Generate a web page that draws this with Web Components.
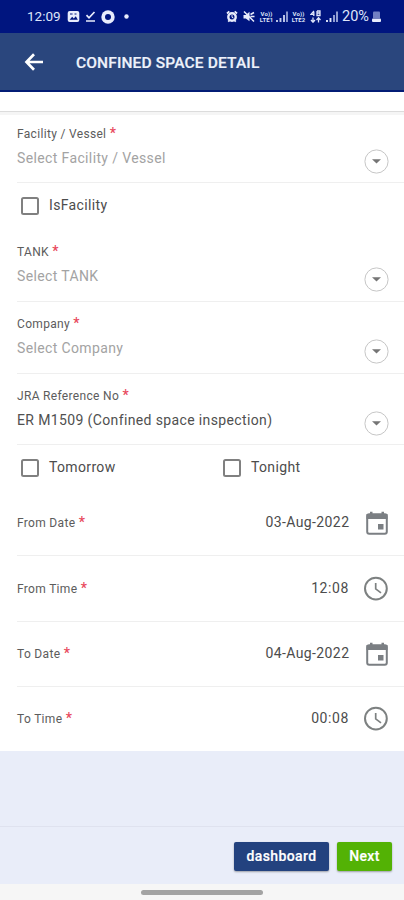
<!DOCTYPE html>
<html lang="en">
<head>
<meta charset="utf-8">
<title>Confined Space Detail</title>
<style>
html, body { margin: 0; height: 100%; background: #e9edf9; }
body { font-family: Roboto, "Liberation Sans", sans-serif; color: #454545; overflow: hidden; }
</style>
</head>
<body>
<cs-app></cs-app>
<script>
function define(name, html) {
  customElements.define(name, class extends HTMLElement {
    connectedCallback() {
      if (this.shadowRoot) return;
      const root = this.attachShadow({ mode: 'open' });
      root.innerHTML = typeof html === 'function' ? html(this) : html;
    }
  });
}

define('cs-status-bar', `
<style>
:host { display: flex; align-items: center; height: 33px; box-sizing: border-box; background: #00157f; color: #dfe5fa; padding: 0 23px 0 27px; }
.time { font-size: 13.5px; line-height: 33px; width: 35px; letter-spacing: 0; margin-right: 5px; }
svg { display: block; flex: none; }
.left { display: flex; align-items: center; gap: 4px; }
.right { display: flex; align-items: center; margin-left: auto; }
.net { font-size: 6px; line-height: 6px; font-weight: 700; width: 15px; text-align: center; letter-spacing: .1px; white-space: nowrap; }
.pct { font-size: 14.5px; width: 30px; letter-spacing: 0; }
</style>
<span class="time">12:09</span>
<div class="left">
<svg width="13" height="13" viewBox="0 0 13 13"><rect x=".7" y="1" width="11.6" height="11" rx="2" fill="#e8ecfc"/><path d="M2.6 9.8l2.6-3 1.6 1.6 2-2.2 2 3.6z" fill="#00157f"/><path d="M3 4h2.6M7.5 4h2" stroke="#00157f" stroke-width="1.2"/></svg>
<svg width="13" height="13" viewBox="0 0 13 13" fill="none" stroke="#e8ecfc" stroke-width="1.700"><path d="M2.500 5.200l2.500 2.600L10.500 2M2 11h9"/></svg>
<svg width="14" height="14" viewBox="0 0 14 14"><circle cx="7" cy="7" r="6.7" fill="#e8ecfc"/><circle cx="7" cy="7" r="3" fill="#00157f"/></svg>
<svg width="5" height="5" viewBox="0 0 5 5" style="margin-left:5px"><circle cx="2.5" cy="2.5" r="2.2" fill="#e8ecfc"/></svg>
</div>
<div class="right">
<svg width="12" height="13" viewBox="0 0 12 13"><circle cx="6" cy="7" r="3.700" fill="none" stroke="#e8ecfc" stroke-width="2.400"/><path d="M1 3.500L3.300 1.400M11 3.500L8.700 1.400M2.200 11.700l1.500-1.500M9.800 11.700l-1.500-1.500" stroke="#e8ecfc" stroke-width="1.800"/><path d="M6 5v2.300l1.500.8" stroke="#e8ecfc" fill="none"/></svg>
<svg width="12" height="13" viewBox="0 0 12 13" style="margin:0 4px 0 5px"><path d="M.5 5h2.300L6.500 1.800v9.400L2.800 8.500H.5z" fill="#e8ecfc"/><path d="M1 1.500l10 10M7.500 4.500l3.500-2M7.500 6.500h4" stroke="#e8ecfc" stroke-width="1.500"/></svg>
<div class="net">Vo))<br>LTE1</div>
<svg width="12" height="13" viewBox="0 0 12 13" style="margin:0 3px 0 2px"><path d="M1 12v-2M4.500 12V8M8 12V5" stroke="#c2cbed" stroke-width="1.900"/><path d="M11 12V1.500" stroke="#98a5d8" stroke-width="1.800"/></svg>
<div class="net">Vo))<br>LTE2</div>
<svg width="11" height="13" viewBox="0 0 11 13" style="margin:0 5px 0 4px" fill="none" stroke="#dfe5fa" stroke-width="1.300"><path d="M4 1L1 4.300h3.500M3.800 2v4M7 1v4M10 3H7v2.500h3V1H7"/><path d="M3 7.500v4.800M1 10l2 2.200L5 10M8.500 12.500V7.800M6.500 10l2-2.200 2 2.200"/></svg>
<svg width="12" height="13" viewBox="0 0 12 13" style="margin:0 4px 0 0"><path d="M1 12v-2M4.500 12V8" stroke="#dfe5fa" stroke-width="1.900"/><path d="M8 12V5M11 12V1.500" stroke="#98a5d8" stroke-width="1.900"/></svg>
<span class="pct">20%</span>
<svg width="9" height="13" viewBox="0 0 9 13"><path d="M1 2.500Q1 1.500 2 1.500h5q1 0 1 1V8H1z" fill="#7180c2"/><rect x="0" y="8.500" width="9" height="3.500" rx="1" fill="#e8ecfc"/></svg>
</div>`);

define('cs-app-bar', `
<style>
:host { display: flex; align-items: center; height: 59px; box-sizing: border-box; padding-left: 24px; padding-top: 1px; background: #2a467d; border-bottom: 2px solid #031c75; color: #eef2fb; }
svg { display: block; margin-right: 32px; }
h1 { margin: 1px 0 0; font-size: 15.5px; font-weight: 500; white-space: nowrap; letter-spacing: .15px; -webkit-text-stroke: .2px; }
</style>
<svg width="20" height="20" viewBox="0 0 20 20" fill="none" stroke="#fff" stroke-width="2.700"><path d="M10 2.300L2.500 10l7.500 7.700M2.500 10H19"/></svg>
<h1><slot></slot></h1>`);

const field = el => `
<style>
:host { display: grid; grid-template-columns: 1fr 25px; box-sizing: border-box; margin-left: 17px; padding-right: 15px; border-bottom: 1px solid #efefef; }
.copy { white-space: nowrap; }
.label { font-size: 12px; line-height: 16px; color: #5c5c5c; letter-spacing: .32px; }
.label b { color: #e8485c; font-weight: 500; font-size: 14px; line-height: 10px; }
.value { font-size: 14px; line-height: 20px; margin-top: 6px; color: #505050; letter-spacing: .37px; }
.value.empty { color: #a3a3a3; }
svg { display: block; margin-top: 23px; }
</style>
<div class="copy"><div class="label">${el.getAttribute('label')} <b>*</b></div>
<div class="value ${el.hasAttribute('empty') ? 'empty' : ''}"><slot></slot></div></div>
<svg width="25" height="25" viewBox="0 0 25 25"><circle cx="12.500" cy="12.500" r="11.600" fill="#fff" stroke="#c6c6c6"/><path d="M8 10.300h9l-4.500 4.200z" fill="#757575"/></svg>`;
define('cs-select-field', field);

define('cs-checkbox', `
<style>
:host { display: flex; align-items: center; gap: 10px; font-size: 14px; line-height: 20px; letter-spacing: .35px; color: #4c4c4c; }
i { width: 18px; height: 18px; box-sizing: border-box; border: 2px solid #808080; border-radius: 2.500px; background: #fff; }
span { white-space: nowrap; margin-top: -1px; }
</style><i></i><span><slot></slot></span>`);

const icons = {
  date: '<svg width="26" height="26" viewBox="0 0 26 26"><path d="M3.200 6.300q0-2 2-2h15.600q2 0 2 2v15.500q0 2-2 2H5.200q-2 0-2-2z" fill="none" stroke="#7b7f83" stroke-width="2"/><path d="M2.500 4h21v5h-21zM6 1.800h2.500V5H6zM17.500 1.800H20V5h-2.500zM14 14h5.500v5.500H14z" fill="#7b7f83"/></svg>',
  time: '<svg width="26" height="26" viewBox="0 0 26 26" fill="none" stroke="#7d8181"><circle cx="11.900" cy="12.600" r="10.900" stroke-width="2"/><path d="M11.700 6.900v6l5.300 4" stroke-width="1.700"/></svg>'
};
define('cs-moment-field', el => `
<style>
:host { display: flex; align-items: center; box-sizing: border-box; margin-left: 17px; padding-right: 14px; border-bottom: 1px solid #efefef; white-space: nowrap; }
.label { font-size: 12px; line-height: 16px; color: #5c5c5c; letter-spacing: .32px; }
.label b { color: #e8485c; font-weight: 500; font-size: 14px; line-height: 10px; }
.value { margin-left: auto; font-size: 14px; line-height: 20px; margin-bottom: 2px; color: #4c4c4c; letter-spacing: .4px; }
.value.time { letter-spacing: .6px; margin-right: 1px; }
svg { display: block; margin-left: 14.600px; }
.time + svg { margin-left: 14px; }
</style>
<span class="label">${el.getAttribute('label')} <b>*</b></span><span class="value ${el.getAttribute('kind')}"><slot></slot></span>${icons[el.getAttribute('kind')]}`);

define('cs-button', `
<style>
:host { display: flex; align-items: center; justify-content: center; height: 29px; box-sizing: border-box; border-radius: 2px; background: var(--tone); color: #fff; font-size: 14px; font-weight: 500; letter-spacing: .4px; box-shadow: 0 1px 2px #0005; -webkit-text-stroke: .2px; padding-bottom: 2px; }
</style><slot></slot>`);

define('cs-footer', `
<style>
:host { display: flex; justify-content: flex-end; align-items: flex-start; gap: 8px; box-sizing: border-box; height: 58px; padding: 15px 12px 0; border-top: 1px solid #dfe2ef; }
</style><slot></slot>`);

define('cs-gesture-bar', `
<style>
:host { display: flex; justify-content: center; align-items: center; height: 16px; background: #f6f6f6; }
i { width: 122px; height: 5px; border-radius: 3px; background: #a3a3a3; }
</style><i></i>`);

define('cs-app', `
<style>
:host { display: flex; flex-direction: column; width: 404px; height: 900px; background: #e9edf9; }
.strip { height: 20px; box-sizing: border-box; background: #fff; border-bottom: 1px solid #dcdcdc; }
.form { display: grid; grid-template-rows: 3px 68px 58px 61px 72px 71px 46px 65px 66px 65px 64px; height: 639px; background: #fff; }
.gap { background: #f5f5f5; }
cs-select-field { padding-top: var(--top, 11px); }
.checks { display: grid; grid-template-columns: 202px 1fr; padding-left: 21px; align-items: start; }
cs-moment-field:last-child { border-color: transparent; }
.space { flex: 1; }
</style>
<cs-status-bar></cs-status-bar>
<cs-app-bar>CONFINED SPACE DETAIL</cs-app-bar>
<div class="strip"></div>
<div class="form">
<div class="gap"></div>
<cs-select-field label="Facility / Vessel" empty>Select Facility / Vessel</cs-select-field>
<div class="checks" style="padding-top:13px"><cs-checkbox>IsFacility</cs-checkbox></div>
<cs-select-field label="TANK" empty style="--top:3px">Select TANK</cs-select-field>
<cs-select-field label="Company" empty style="--top:14px">Select Company</cs-select-field>
<cs-select-field label="JRA Reference No" style="--top:13.500px">ER M1509 (Confined space inspection)</cs-select-field>
<div class="checks" style="padding-top:13px"><cs-checkbox>Tomorrow</cs-checkbox><cs-checkbox>Tonight</cs-checkbox></div>
<cs-moment-field label="From Date" kind="date">03-Aug-2022</cs-moment-field>
<cs-moment-field label="From Time" kind="time">12:08</cs-moment-field>
<cs-moment-field label="To Date" kind="date">04-Aug-2022</cs-moment-field>
<cs-moment-field label="To Time" kind="time">00:08</cs-moment-field>
</div>
<div class="space"></div>
<cs-footer><cs-button style="--tone:#23427f;width:95px">dashboard</cs-button><cs-button style="--tone:#53b205;width:55px">Next</cs-button></cs-footer>
<cs-gesture-bar></cs-gesture-bar>`);
</script>
</body>
</html>
